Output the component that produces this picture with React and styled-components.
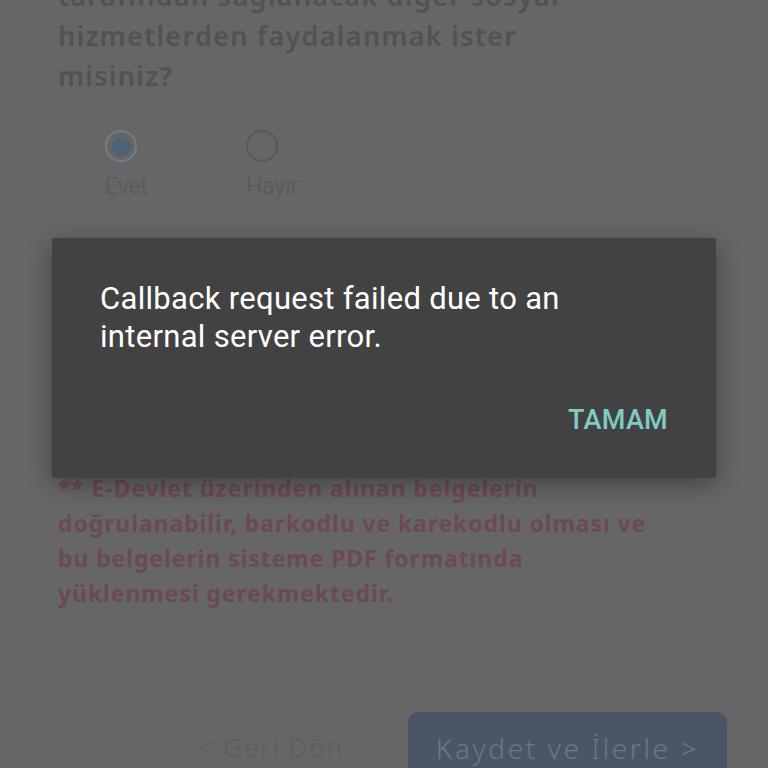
import React from "react";
import styled, { createGlobalStyle } from "styled-components";

const Global = createGlobalStyle`
  html, body {
    margin: 0;
    padding: 0;
    background: #666666;
    overflow: hidden;
  }
  #root {
    width: 768px;
    height: 768px;
  }
`;

const Screen = styled.div`
  position: relative;
  width: 768px;
  height: 768px;
  overflow: hidden;
  background: #666666;
`;

const Page = styled.div`
  display: flex;
  flex-direction: column;
  padding: 0 20px 0 58px;
  margin-top: -24px;
`;

const Question = styled.p`
  margin: 0;
  font-family: "Noto Sans", "DejaVu Sans", sans-serif;
  font-weight: 600;
  font-size: 27px;
  line-height: 40px;
  letter-spacing: 1.3px;
  color: #525252;
  white-space: nowrap;
`;

const RadioRow = styled.div`
  display: flex;
  margin-top: 34px;
  padding-left: 47px;
`;

const Option = styled.div`
  display: flex;
  flex-direction: column;
  align-items: flex-start;
  width: 141px;
`;

const Circle = styled.div`
  box-sizing: border-box;
  width: 32px;
  height: 32px;
  border-radius: 50%;
  border: 2px solid ${(p) => (p.checked ? "#737d89" : "#585858")};
  display: flex;
  align-items: center;
  justify-content: center;
  &::after {
    content: "";
    width: 19px;
    height: 19px;
    border-radius: 50%;
    background: ${(p) => (p.checked ? "#4f6377" : "transparent")};
  }
`;

const OptionLabel = styled.span`
  margin-top: 11px;
  font-family: Roboto, "Liberation Sans", sans-serif;
  font-weight: 300;
  font-size: 23px;
  line-height: 27px;
  color: #585858;
`;

const Notice = styled.p`
  margin: 271px 0 0;
  font-family: "Noto Sans", "DejaVu Sans", sans-serif;
  font-weight: 700;
  font-size: 23px;
  line-height: 35px;
  letter-spacing: 0.9px;
  color: #6d4951;
  white-space: nowrap;
`;

const Actions = styled.div`
  display: flex;
  align-items: flex-start;
  margin-top: 95px;
  margin-left: 112px;
  gap: 8px;
`;

const BackButton = styled.div`
  box-sizing: border-box;
  width: 230px;
  height: 80px;
  border: 1px solid #686868;
  border-radius: 8px;
  display: flex;
  align-items: flex-start;
  justify-content: center;
  padding: 22px 28px 0 0;
  font-family: "Noto Sans", "DejaVu Sans", sans-serif;
  font-weight: 300;
  font-size: 26px;
  letter-spacing: 1.8px;
  color: #5c5c5c;
`;

const NextButton = styled.div`
  box-sizing: border-box;
  width: 319px;
  height: 80px;
  margin-top: 6px;
  border-radius: 10px;
  background: #4a5566;
  display: flex;
  align-items: flex-start;
  justify-content: center;
  padding-top: 17px;
  font-family: "Noto Sans", "DejaVu Sans", sans-serif;
  font-weight: 300;
  font-size: 28px;
  letter-spacing: 2.6px;
  color: #6c7686;
`;

const Dialog = styled.div`
  position: absolute;
  left: 52px;
  top: 238px;
  width: 664px;
  height: 240px;
  box-sizing: border-box;
  background: #424242;
  border-radius: 2px;
  box-shadow: 0 6px 24px rgba(0, 0, 0, 0.35);
  display: flex;
  flex-direction: column;
  padding: 42px 48px 0 48px;
`;

const Message = styled.p`
  margin: 0;
  font-family: Roboto, "Liberation Sans", sans-serif;
  font-size: 31px;
  line-height: 38px;
  letter-spacing: 0.3px;
  color: #ffffff;
`;

const DialogActions = styled.div`
  display: flex;
  justify-content: flex-end;
  margin-top: 48px;
`;

const OkButton = styled.button`
  border: none;
  background: none;
  padding: 0;
  font-family: Roboto, "Liberation Sans", sans-serif;
  font-weight: 500;
  font-size: 27px;
  line-height: 32px;
  color: #80cbc4;
  letter-spacing: 0.3px;
`;

export default function App() {
  return (
    <Screen>
      <Global />
      <Page>
        <Question>
          tarafından sağlanacak diğer sosyal
          <br />
          hizmetlerden faydalanmak ister
          <br />
          misiniz?
        </Question>
        <RadioRow>
          <Option>
            <Circle checked />
            <OptionLabel>Evet</OptionLabel>
          </Option>
          <Option>
            <Circle />
            <OptionLabel>Hayır</OptionLabel>
          </Option>
        </RadioRow>
        <Notice>
          ** E-Devlet üzerinden alınan belgelerin
          <br />
          doğrulanabilir, barkodlu ve karekodlu olması ve
          <br />
          bu belgelerin sisteme PDF formatında
          <br />
          yüklenmesi gerekmektedir.
        </Notice>
        <Actions>
          <BackButton>&lt; Geri Dön</BackButton>
          <NextButton>Kaydet ve İlerle &gt;</NextButton>
        </Actions>
      </Page>
      <Dialog>
        <Message>
          Callback request failed due to an
          <br />
          internal server error.
        </Message>
        <DialogActions>
          <OkButton>TAMAM</OkButton>
        </DialogActions>
      </Dialog>
    </Screen>
  );
}
